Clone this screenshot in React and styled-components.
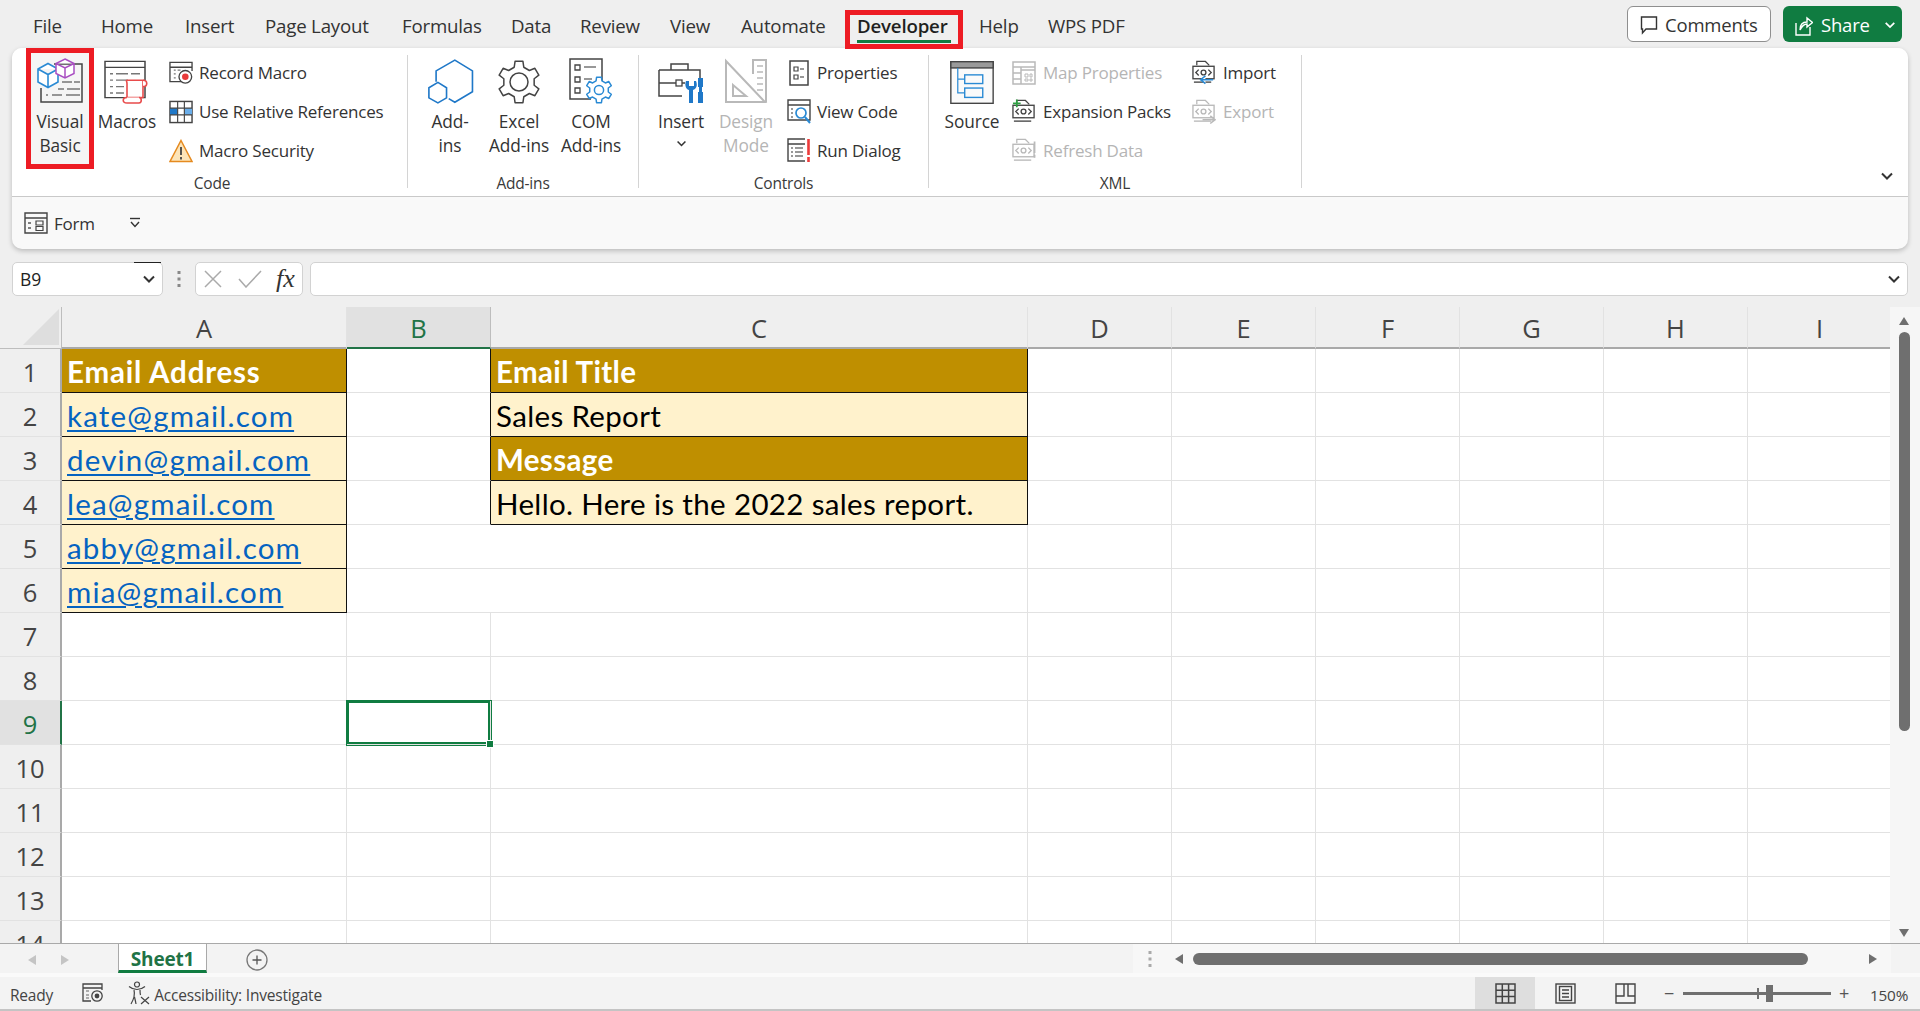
import styled, { createGlobalStyle } from "styled-components";

const GlobalStyle = createGlobalStyle`
  html, body { margin: 0; padding: 0; height: 100%; overflow: hidden; }
  body { background: #efefef; font-family: "Open Sans", "Liberation Sans", sans-serif; color: #333; }
  #root { height: 100%; }
`;

const Page = styled.div`
  display: flex;
  flex-direction: column;
  width: 1920px;
  height: 1011px;
  overflow: hidden;
`;

/* top tabs */
const TopBar = styled.div`
  display: flex;
  align-items: center;
  height: 48px;
  padding-left: 33px;
  flex: none;
`;
const Tab = styled.div`
  position: relative;
  width: ${(p) => p.$w}px;
  flex: none;
  font-size: 18.7px;
  letter-spacing: -0.2px;
  line-height: 48px;
  height: 48px;
  padding-top: 2px;
  box-sizing: border-box;
  color: ${(p) => (p.$active ? "#1f1f1f" : "#333")};
  font-weight: ${(p) => (p.$active ? 600 : 400)};
  white-space: nowrap;
  ${(p) =>
    p.$active &&
    `
    &::before {
      content: "";
      position: absolute;
      left: -12px;
      top: 10px;
      width: 118px;
      height: 39px;
      box-sizing: border-box;
      border: 5px solid #ed1c24;
      z-index: 2;
    }
    &::after {
      content: "";
      position: absolute;
      left: 0;
      top: 40px;
      width: 94px;
      height: 3px;
      background: #107c41;
      z-index: 3;
    }
  `}
`;
const TopRight = styled.div`
  margin-left: auto;
  margin-right: 18px;
  display: flex;
  gap: 12px;
  align-items: center;
`;
const CommentsButton = styled.div`
  display: flex;
  align-items: center;
  gap: 7px;
  box-sizing: border-box;
  width: 144px;
  height: 36px;
  padding: 1px 0 0 12px;
  background: #fff;
  border: 1px solid #8f8f8f;
  border-radius: 6px;
  font-size: 18.5px;
  letter-spacing: -0.2px;
  color: #333;
`;
const ShareButton = styled.div`
  display: flex;
  align-items: center;
  gap: 8px;
  box-sizing: border-box;
  width: 119px;
  height: 36px;
  padding: 1px 0 0 12px;
  background: #107c41;
  border-radius: 6px;
  color: #fff;
  font-size: 18.5px;
  letter-spacing: -0.2px;
`;

/* ribbon */
const Ribbon = styled.div`
  flex: none;
  margin: 0 12px;
  height: 201px;
  box-sizing: border-box;
  border-radius: 10px;
  background: #f9f9f9;
  box-shadow: 0 2px 5px rgba(0, 0, 0, 0.22);
  display: flex;
  flex-direction: column;
`;
const RibbonTop = styled.div`
  display: flex;
  height: 148px;
  background: #fff;
  border-radius: 10px 10px 0 0;
  border-bottom: 1px solid #c9c9c9;
`;
const Group = styled.div`
  width: ${(p) => p.$w}px;
  flex: none;
  display: flex;
  flex-direction: column;
`;
const GroupBody = styled.div`
  display: flex;
  height: 122px;
  padding-left: ${(p) => p.$pad}px;
`;
const GroupLabel = styled.div`
  text-align: center;
  font-size: 15.5px;
  letter-spacing: -0.2px;
  line-height: 26px;
  color: #3a3a3a;
  padding-left: ${(p) => p.$shift || 0}px;
`;
const Separator = styled.div`
  width: 1px;
  flex: none;
  margin: 7px 0 8px;
  background: #d4d4d4;
`;
const LargeButton = styled.div`
  width: ${(p) => p.$w}px;
  flex: none;
  display: flex;
  flex-direction: column;
  align-items: center;
  box-sizing: border-box;
  padding-top: 7px;
  font-size: 17.3px;
  letter-spacing: -0.1px;
  line-height: 24px;
  white-space: nowrap;
  color: ${(p) => (p.$off ? "#b5b5b5" : "#333")};
  ${(p) =>
    p.$marked &&
    `
    height: 111px;
    margin-top: 5px;
    padding-top: 2px;
    background: #f5f5f5;
    outline: 5px solid #ed1c24;
  `}
`;
const IconSlot = styled.div`
  height: 55px;
  box-sizing: border-box;
  padding-bottom: 6px;
  display: flex;
  align-items: flex-end;
  justify-content: center;
  flex: none;
`;
const LabelChevron = styled.span`
  margin-top: 4px;
  line-height: 0;
`;
const SmallColumn = styled.div`
  width: ${(p) => p.$w || "auto"};
  margin-left: ${(p) => p.$ml || 0}px;
  padding-top: 5px;
  flex: none;
`;
const SmallRow = styled.div`
  display: flex;
  align-items: center;
  gap: ${(p) => p.$gap || 6}px;
  height: 39px;
  font-size: 17px;
  letter-spacing: -0.2px;
  white-space: nowrap;
  color: ${(p) => (p.$off ? "#b5b5b5" : "#333")};
`;
const SmallIcon = styled.span`
  width: 24px;
  height: 26px;
  display: flex;
  align-items: center;
  justify-content: center;
  flex: none;
`;
const CollapseButton = styled.div`
  margin: auto 14px 13px auto;
  line-height: 0;
`;
const QuickRow = styled.div`
  display: flex;
  align-items: center;
  flex: 1;
  padding-left: 12px;
  font-size: 17px;
  letter-spacing: -0.2px;
  color: #333;
  border-radius: 0 0 10px 10px;
`;
const QuickLabel = styled.span`
  margin-left: 6px;
  width: 75px;
`;

/* formula bar */
const FormulaBar = styled.div`
  flex: none;
  display: flex;
  align-items: stretch;
  height: 34px;
  margin: 13px 12px 11px;
`;
const FieldBox = styled.div`
  position: relative;
  display: flex;
  align-items: center;
  box-sizing: border-box;
  background: #fff;
  border: 1px solid #d2d2d2;
  border-radius: 5px;
  width: ${(p) => (p.$w ? `${p.$w}px` : "auto")};
  flex: ${(p) => (p.$w ? "none" : "1")};
`;
const NameText = styled.span`
  font-size: 17.5px;
  margin-left: 7px;
  color: #222;
`;
const NameMark = styled.span`
  position: absolute;
  top: -1px;
  right: 1px;
  width: 27px;
  height: 1px;
  background: #222;
`;
const Chevron = styled.span`
  margin-left: auto;
  margin-right: 6px;
  line-height: 0;
`;
const DotsSlot = styled.div`
  width: 32px;
  flex: none;
  display: flex;
  align-items: center;
  justify-content: center;
`;
const FxButtons = styled.div`
  display: flex;
  align-items: center;
  gap: 16px;
  padding-left: 8px;
`;
const FxGap = styled.div`
  width: 7px;
  flex: none;
`;
const FxLabel = styled.span`
  font-family: "Liberation Serif", serif;
  font-style: italic;
  font-size: 26px;
  color: #333;
  margin-left: -2px;
  line-height: 1;
`;

/* sheet */
const SheetArea = styled.div`
  flex: none;
  height: 636px;
  display: flex;
  overflow: hidden;
`;
const SheetCells = styled.div`
  display: grid;
  grid-template-columns: 62px 285px 144px 537px repeat(6, 144px) 0px;
  grid-template-rows: 42px repeat(14, 44px);
  width: 1890px;
  flex: none;
  background: #fff;
  align-content: start;
  overflow: hidden;
`;
const Corner = styled.div`
  background: #efefef;
  border-bottom: 1px solid #bdbdbd;
  border-right: 1px solid #bdbdbd;
  box-sizing: border-box;
  display: flex;
  align-items: flex-end;
  justify-content: flex-end;
  padding: 0 2px 3px 0;
`;
const ColHead = styled.div`
  display: flex;
  align-items: center;
  justify-content: center;
  box-sizing: border-box;
  font-size: 25.5px;
  padding-top: 2px;
  background: ${(p) => (p.$sel ? "#e1e1e1" : "#efefef")};
  color: ${(p) => (p.$sel ? "#217346" : "#444")};
  border-right: 1px solid ${(p) => (p.$sel ? "#bdbdbd" : "#e2e2e2")};
  border-bottom: ${(p) => (p.$sel ? "2px solid #217346" : "2px solid #a9a9a9")};
`;
const RowHead = styled.div`
  display: flex;
  align-items: center;
  justify-content: center;
  box-sizing: border-box;
  font-size: 25.5px;
  padding-top: 2px;
  background: ${(p) => (p.$sel ? "#e1e1e1" : "#efefef")};
  color: ${(p) => (p.$sel ? "#217346" : "#444")};
  border-right: ${(p) => (p.$sel ? "2px solid #217346" : "2px solid #a9a9a9")};
  border-bottom: 1px solid #e2e2e2;
`;
const Cell = styled.div`
  position: relative;
  box-sizing: border-box;
  display: flex;
  align-items: flex-end;
  padding: 0 0 1px 5px;
  font-family: Lato, "Open Sans", sans-serif;
  font-size: 29.5px;
  letter-spacing: ${(p) => p.$track || 0}px;
  line-height: 38px;
  white-space: nowrap;
  grid-column: ${(p) => (p.$span ? `span ${p.$span}` : "auto")};
  background: ${(p) => p.$fill || "#fff"};
  color: ${(p) => p.$ink || "#000"};
  font-weight: ${(p) => (p.$bold ? 700 : 400)};
  border-right: ${(p) => (p.$edge ? "1.5px solid #111" : "1px solid #e2e2e2")};
  border-bottom: ${(p) => (p.$boxed ? "1.5px solid #111" : "1px solid #e2e2e2")};
  ${(p) =>
    p.$current &&
    `
    z-index: 1;
    box-shadow: inset 0 0 0 2px #107c41, 0 0 0 1px #107c41;
    &::after {
      content: "";
      position: absolute;
      right: -4px;
      bottom: -4px;
      width: 6px;
      height: 6px;
      background: #107c41;
      border: 1px solid #fff;
      z-index: 2;
    }
  `}
`;
const MailLink = styled.span`
  color: #0563c1;
  text-decoration: underline;
  text-decoration-thickness: 2px;
  text-underline-offset: 3px;
`;

const VerticalScroll = styled.div`
  width: 30px;
  flex: none;
  display: flex;
  flex-direction: column;
  align-items: center;
  padding-left: 0;
  box-sizing: border-box;
  background: #f6f6f6;
  padding-right: 2px;
`;
const VThumb = styled.div`
  width: 11px;
  height: 399px;
  margin-top: 5px;
  background: #6f6f6f;
  border-radius: 6px;
`;
const ArrowSlot = styled.div`
  line-height: 0;
  margin-top: ${(p) => p.$mt || 0}px;
`;

/* sheet tabs */
const TabsRow = styled.div`
  flex: none;
  height: 34px;
  box-sizing: border-box;
  border-top: 1px solid #a9a9a9;
  background: #f3f3f3;
  display: flex;
  align-items: flex-start;
  position: relative;
`;
const TabsFoot = styled.div`
  position: absolute;
  left: 0;
  right: 0;
  bottom: 0;
  height: 4px;
  background: #fafafa;
`;
const NavArrows = styled.div`
  display: flex;
  gap: 21px;
  width: 118px;
  box-sizing: border-box;
  padding: 10px 0 0 26px;
  flex: none;
`;
const SheetTab = styled.div`
  width: 89px;
  height: 30px;
  box-sizing: border-box;
  flex: none;
  margin-top: -1px;
  background: #fff;
  border: 1px solid #a9a9a9;
  border-top: 1px solid #a9a9a9;
  border-bottom: 3px solid #107c41;
  color: #217346;
  font-weight: 700;
  font-size: 19px;
  letter-spacing: -0.2px;
  line-height: 30px;
  text-align: center;
`;
const AddSheet = styled.div`
  margin: 5px 0 0 39px;
  line-height: 0;
`;
const HScrollWrap = styled.div`
  margin-left: auto;
  width: 758px;
  height: 29px;
  display: flex;
  align-items: center;
  background: #f7f7f7;
  position: relative;
  margin-right: 29px;
`;
const HDots = styled.div`
  width: 34px;
  flex: none;
  display: flex;
  justify-content: center;
`;
const HThumb = styled.div`
  width: 615px;
  height: 12px;
  background: #6f6f6f;
  border-radius: 6px;
  margin-left: 8px;
`;
const HArrow = styled.div`
  line-height: 0;
  margin-left: ${(p) => p.$ml || 0}px;
`;

/* status bar */
const StatusBar = styled.div`
  flex: none;
  height: 32px;
  background: #f3f3f3;
  display: flex;
  align-items: center;
  padding-left: 10px;
  font-size: 15.5px;
  letter-spacing: -0.2px;
  color: #444;
`;
const StatusGap = styled.span`
  width: ${(p) => p.$w}px;
  flex: none;
`;
const StatusText = styled.span`
  white-space: nowrap;
  padding-top: 3px;
`;
const ViewButtons = styled.div`
  margin-left: auto;
  display: flex;
  align-items: stretch;
  height: 100%;
`;
const ViewButton = styled.div`
  width: 60px;
  display: flex;
  align-items: center;
  justify-content: center;
  background: ${(p) => (p.$on ? "#dedede" : "transparent")};
`;
const ZoomBox = styled.div`
  display: flex;
  align-items: center;
  margin-left: 7px;
  width: 258px;
  flex: none;
`;
const ZoomSign = styled.span`
  width: 14px;
  text-align: center;
  font-size: 18px;
  line-height: 1;
  color: #555;
`;
const ZoomTrack = styled.div`
  position: relative;
  width: 148px;
  height: 3px;
  background: #6f6f6f;
  margin: 0 6px 0 7px;
`;
const ZoomTick = styled.span`
  position: absolute;
  left: 74px;
  top: -4px;
  width: 2px;
  height: 11px;
  background: #6f6f6f;
`;
const ZoomKnob = styled.span`
  position: absolute;
  left: 83px;
  top: -7px;
  width: 7px;
  height: 17px;
  background: #6f6f6f;
`;
const ZoomValue = styled.span`
  margin-left: 19px;
  padding-top: 3px;
  font-size: 15.3px;
`;
const BottomLine = styled.div`
  flex: none;
  height: 2px;
  background: #c4c4c4;
`;

/* drawings */
const DARK = "#444";
const BLUE = "#2a8ad4";
const GREY = "#b9b9b9";

const gearPath = (cx, cy, outer, inner, teeth, start = 0) => {
  const pts = [];
  const step = (Math.PI * 2) / teeth;
  for (let i = 0; i < teeth; i++) {
    const a = start + i * step;
    const w = step * 0.18;
    const v = step * 0.3;
    [
      [inner, a - v],
      [outer, a - w],
      [outer, a + w],
      [inner, a + v],
    ].forEach(([r, t]) => pts.push(`${(cx + r * Math.cos(t)).toFixed(2)} ${(cy + r * Math.sin(t)).toFixed(2)}`));
  }
  return `M${pts.join("L")}Z`;
};

const VisualBasicIcon = () => (
  <svg width="48" height="46" viewBox="0 0 48 46" fill="none">
    <path d="M18 6H46V44H5V30" stroke={DARK} strokeWidth="1.5" />
    <path d="M26 24h10M38 24h6M22 31h6M31 31h13M10 37h2M16 37h10M30 37h14" stroke="#777" strokeWidth="1.4" />
    <path d="M12 5.5L22 11V24L12 29.5L2 24V11Z M2 11L12 16.5L22 11 M12 16.5V29.5" stroke={BLUE} strokeWidth="1.6" fill="#fff" />
    <path d="M29 1L38 5.5V15.5L29 20L20 15.5V5.5Z M20 5.5L29 10L38 5.5 M29 10V20" stroke="#a94fc2" strokeWidth="1.5" fill="#fff" />
  </svg>
);
const MacrosIcon = () => (
  <svg width="46" height="44" viewBox="0 0 46 48" preserveAspectRatio="none" fill="none">
    <path d="M1 1.5H41V41H1Z M1 8H41" stroke={DARK} strokeWidth="1.5" />
    <path d="M6 15h3M12 15h12M27 15h9M6 22h3M12 22h12M6 29h3M12 29h8M6 36h3M12 36h8" stroke="#777" strokeWidth="1.4" />
    <path d="M24 22H39V41H23V26C23 22 21 22 24 22Z" stroke="#e84b4b" strokeWidth="1.6" fill="#fff" />
    <path d="M39 22C44 22 44 29 39 29M23 41C18 41 18 47 23 47H35C38 47 38 41 35 41" stroke="#e84b4b" strokeWidth="1.6" fill="#fff" />
  </svg>
);
const RecordIcon = () => (
  <svg width="25" height="24" viewBox="0 0 25 24" fill="none">
    <path d="M13 21H1V1H24V10 M1 6H24" stroke={DARK} strokeWidth="1.4" />
    <path d="M5 9h2M5 13h2M5 17h2M9 9h3" stroke="#777" strokeWidth="1.3" />
    <circle cx="17" cy="16" r="6.6" stroke={DARK} strokeWidth="1.4" fill="#fff" />
    <circle cx="17" cy="16" r="3.4" fill="#e83a3a" />
  </svg>
);
const RelativeIcon = () => (
  <svg width="25" height="24" viewBox="0 0 25 24">
    <rect x="1" y="1" width="23" height="22" fill="#fff" stroke={DARK} strokeWidth="1.5" />
    <rect x="1" y="8" width="8" height="7" fill="#1f78c8" />
    <rect x="16" y="8" width="8" height="7" fill="#6aaeea" />
    <path d="M9 1V23M16 1V23M1 8H24M1 15H24" stroke={DARK} strokeWidth="1.2" fill="none" />
  </svg>
);
const WarningIcon = () => (
  <svg width="24" height="24" viewBox="0 0 24 24">
    <path d="M12 1.5L23 22.5H1Z" fill="#fce4b8" stroke="#e58a1f" strokeWidth="1.5" />
    <path d="M12 8V16M12 18V20.5" stroke="#444" strokeWidth="1.8" />
  </svg>
);
const AddInsIcon = () => (
  <svg width="47" height="45" viewBox="40 27 130 125" fill="none" stroke="#1f78c8" strokeWidth="4.5">
    <path d="M65 90V60L117 30L166 60V118L117 147L100 137" />
    <path d="M70 92L94 107V135L70 149L45 135V107Z" />
  </svg>
);
const GearIcon = () => (
  <svg width="44" height="44" viewBox="0 0 44 44" fill="none" stroke={DARK} strokeWidth="1.5">
    <path d={gearPath(22, 22, 21, 15.5, 6, Math.PI / 6)} strokeLinejoin="round" />
    <circle cx="22" cy="22" r="9" />
  </svg>
);
const ComIcon = () => (
  <svg width="44" height="46" viewBox="0 0 44 46" fill="none">
    <path d="M33 27V1H1V41H22" stroke={DARK} strokeWidth="1.5" />
    <path d="M6 7H11V12H6Z M6 19H11V24H6Z M6 30H11V35H6Z" stroke={DARK} strokeWidth="1.3" />
    <path d="M15 9h12M15 21h8" stroke="#777" strokeWidth="1.4" />
    <path d={gearPath(30, 32, 13, 9.5, 6, Math.PI / 6)} stroke={BLUE} strokeWidth="1.5" fill="#fff" strokeLinejoin="round" />
    <circle cx="30" cy="32" r="4.6" stroke={BLUE} strokeWidth="1.5" />
  </svg>
);
const InsertIcon = () => (
  <svg width="46" height="46" viewBox="0 -4 46 46" fill="none">
    <path d="M1 8H42V21 M1 8V34H24 M1 21H18M24 21H27 M13 8V2H30V8" stroke={DARK} strokeWidth="1.5" />
    <rect x="18" y="18" width="6" height="6" stroke={DARK} strokeWidth="1.3" />
    <path d="M28 19C26 24 29 28 31 28V41H35V28C38 27 40 24 38 19L36 19V24H31V19Z" fill="#1f78c8" />
    <path d="M40 16H45V25H44V30H45V41H40V30H41V25H40Z" fill="#1f78c8" />
  </svg>
);
const DesignIcon = () => (
  <svg width="44" height="46" viewBox="0 0 44 46" fill="none" stroke={GREY} strokeWidth="2">
    <path d="M2 3L41 44H2Z" />
    <path d="M9 27L22 38H9Z" />
    <path d="M29 16V2H42V44" />
    <path d="M33 8h6M33 14h6M33 20h6M33 26h6M33 32h6" strokeWidth="1.4" />
  </svg>
);
const PropertiesIcon = () => (
  <svg width="20" height="26" viewBox="0 0 20 26" fill="none">
    <rect x="1" y="1" width="18" height="24" stroke={DARK} strokeWidth="1.5" />
    <path d="M5 7H9V11H5Z M5 15H9V19H5Z" stroke={DARK} strokeWidth="1.2" />
    <path d="M11 9h4M11 17h4" stroke="#777" strokeWidth="1.4" />
  </svg>
);
const ViewCodeIcon = () => (
  <svg width="24" height="25" viewBox="0 0 24 25" fill="none">
    <path d="M1 1H23V21H1Z M1 6H23" stroke={DARK} strokeWidth="1.4" />
    <path d="M4 10h2M4 14h2M4 18h2" stroke="#777" strokeWidth="1.3" />
    <circle cx="14" cy="14" r="5" stroke={BLUE} strokeWidth="1.7" fill="#fff" />
    <path d="M18 18L23 24" stroke={BLUE} strokeWidth="2" />
  </svg>
);
const RunDialogIcon = () => (
  <svg width="24" height="25" viewBox="0 0 24 25" fill="none">
    <path d="M18 23H1V1H18 M1 6H18" stroke={DARK} strokeWidth="1.4" />
    <path d="M4 10h2M8 10h8M4 14h2M8 14h8M4 18h2M8 18h8" stroke="#777" strokeWidth="1.3" />
    <path d="M21.5 1V17M21.5 19V24" stroke="#ed3b3b" strokeWidth="2.6" />
  </svg>
);
const SourceIcon = () => (
  <svg width="44" height="43" viewBox="36 18 126 124" fill="none">
    <rect x="38" y="20" width="122" height="120" fill="#fafafa" stroke={DARK} strokeWidth="4" />
    <rect x="38" y="20" width="122" height="18" fill="#9a9a9a" stroke={DARK} strokeWidth="4" />
    <path d="M58 38V110H78M58 70H78" stroke={BLUE} strokeWidth="3.5" />
    <rect x="78" y="58" width="52" height="25" stroke={BLUE} strokeWidth="4" />
    <rect x="78" y="96" width="52" height="27" stroke={BLUE} strokeWidth="4" />
  </svg>
);
const MapIcon = () => (
  <svg width="24" height="24" viewBox="0 0 24 24" fill="none" stroke={GREY} strokeWidth="1.5">
    <rect x="1" y="1" width="22" height="22" />
    <path d="M1 6H23M1 12H9M1 18H9M9 6V23M9 9H23" />
    <path d="M13 13H16V16H13Z M18 13H20V16H18Z M13 18H16V20H13Z M18 18H20V20H18Z" strokeWidth="1" />
  </svg>
);
const PackIcon = ({ ink = DARK, kind }) => (
  <svg width="25" height="26" viewBox="0 0 25 26" fill="none">
    <path d="M5 5V1H14L18 5" stroke={ink} strokeWidth="1.3" />
    <rect x="1" y="6" width="22" height="13" stroke={ink} strokeWidth="1.4" fill="#fff" />
    <path d="M7 9.5L4 12.5L7 15.5M17 9.5L20 12.5L17 15.5" stroke={ink} strokeWidth="1.4" />
    <circle cx="12" cy="12.5" r="2.5" stroke={ink} strokeWidth="1.4" />
    <path d="M2 22.5H20" stroke={ink} strokeWidth="1.4" />
    {kind === "plus" && <path d="M5 0V8M1 4H9" stroke="#2ea043" strokeWidth="1.8" />}
    {kind === "in" && <path d="M22 20H10M14 16L9 20L14 24" stroke={BLUE} strokeWidth="1.6" fill="#fff" />}
    {kind === "out" && <path d="M11 21H23M19 17L24 21L19 25" stroke={GREY} strokeWidth="1.6" />}
    {kind === "bang" && <path d="M23.5 3V15M23.5 17V20" stroke={GREY} strokeWidth="1.8" />}
  </svg>
);
const FormIcon = () => (
  <svg width="24" height="22" viewBox="0 0 24 22" fill="none">
    <path d="M1 1H23V21H1Z M1 6H23" stroke={DARK} strokeWidth="1.4" />
    <path d="M4 11h3M4 16h3" stroke="#555" strokeWidth="1.3" />
    <path d="M12 9H19V13H12Z M12 14.5H19V18.5H12Z" stroke={DARK} strokeWidth="1.2" />
  </svg>
);
const QuickMenuIcon = () => (
  <svg width="12" height="12" viewBox="0 0 12 12" fill="none" stroke="#333" strokeWidth="1.4">
    <path d="M1 1.5H11" />
    <path d="M2 5L6 9.5L10 5" />
  </svg>
);
const ChevronIcon = ({ size = 14, ink = "#333", weight = 2 }) => (
  <svg width={size} height={size} viewBox="0 0 14 14" fill="none" stroke={ink} strokeWidth={weight}>
    <path d="M2 4.5L7 9.5L12 4.5" />
  </svg>
);
const CommentIcon = () => (
  <svg width="18" height="20" viewBox="0 0 18 20" fill="none" stroke="#333" strokeWidth="1.4">
    <path d="M1.5 2H16.5V14H6L2.5 18V14H1.5Z" />
  </svg>
);
const ShareIcon = () => (
  <svg width="18" height="22" viewBox="0 0 18 22" fill="none" stroke="#fff" strokeWidth="1.4">
    <path d="M1 9V21H15V13" />
    <path d="M5 16C5 10 8 8 12 8V4L17.5 8.5L12 13V10C9 10 7 12 5 16Z" />
  </svg>
);
const Triangle = ({ dir, ink = "#6f6f6f", size = 12 }) => {
  const shapes = {
    up: "M6 2L11 10H1Z",
    down: "M1 2H11L6 10Z",
    left: "M10 1V11L2 6Z",
    right: "M2 1V11L10 6Z",
  };
  return (
    <svg width={size} height={size} viewBox="0 0 12 12">
      <path d={shapes[dir]} fill={ink} />
    </svg>
  );
};
const CornerMark = () => (
  <svg width="36" height="36" viewBox="0 0 36 36">
    <path d="M36 0V36H0Z" fill="#dedede" />
  </svg>
);
const XMark = () => (
  <svg width="18" height="18" viewBox="0 0 18 18" stroke="#aaa" strokeWidth="1.5" fill="none">
    <path d="M1 1L17 17M17 1L1 17" />
  </svg>
);
const CheckMark = () => (
  <svg width="24" height="18" viewBox="0 0 24 18" stroke="#aaa" strokeWidth="1.5" fill="none">
    <path d="M1 9L8 17L23 1" />
  </svg>
);
const Dots = ({ ink = "#888" }) => (
  <svg width="4" height="18" viewBox="0 0 4 18" fill={ink}>
    <rect x="0.5" y="1" width="3" height="3" />
    <rect x="0.5" y="7.5" width="3" height="3" />
    <rect x="0.5" y="14" width="3" height="3" />
  </svg>
);
const AddSheetIcon = () => (
  <svg width="22" height="22" viewBox="0 0 22 22" fill="none" stroke="#777" strokeWidth="1.3">
    <circle cx="11" cy="11" r="10" />
    <path d="M11 6.5V15.5M6.5 11H15.5" stroke="#555" />
  </svg>
);
const StatusMacroIcon = () => (
  <svg width="22" height="20" viewBox="0 0 22 20" fill="none">
    <path d="M9 18H1V1H20V7 M1 5H20" stroke={DARK} strokeWidth="1.3" />
    <path d="M4 8h3M4 12h3M4 15h3" stroke="#666" strokeWidth="1.2" />
    <circle cx="15" cy="13" r="5.2" stroke={DARK} strokeWidth="1.3" />
    <circle cx="15" cy="13" r="2.4" fill={DARK} />
  </svg>
);
const AccessIcon = () => (
  <svg width="22" height="24" viewBox="0 0 22 24" fill="none" stroke="#444" strokeWidth="1.2">
    <circle cx="9" cy="3.5" r="2.5" />
    <path d="M1 5.5C4 8 6 8.5 9 8.5C12 8.5 14 8 17 5.5 M6 9C7 13 6.5 17 3 23 M12 9C12 11 12 12 12.5 14 M6.5 16C7 18 7.5 20 8 23" />
    <path d="M13 16L21 23M21 16L13 23" />
  </svg>
);
const NormalViewIcon = () => (
  <svg width="21" height="21" viewBox="0 0 21 21" fill="none" stroke="#444" strokeWidth="1.5">
    <rect x="1" y="1" width="19" height="19" />
    <path d="M7.3 1V20M13.6 1V20M1 7.3H20M1 13.6H20" />
  </svg>
);
const PageViewIcon = () => (
  <svg width="21" height="21" viewBox="0 0 21 21" fill="none" stroke="#444" strokeWidth="1.4">
    <rect x="1" y="1" width="19" height="19" />
    <rect x="4.5" y="3.5" width="12" height="14" />
    <path d="M7 7H14M7 10.5H14M7 14H14" />
  </svg>
);
const BreakViewIcon = () => (
  <svg width="21" height="21" viewBox="0 0 21 21" fill="none" stroke="#444" strokeWidth="1.4">
    <path d="M1 1H20V20H1Z M1 13H9V1M13 1V13H20" />
  </svg>
);

/* data */
const TABS = [
  ["File", 68],
  ["Home", 84],
  ["Insert", 80],
  ["Page Layout", 137],
  ["Formulas", 109],
  ["Data", 69],
  ["Review", 90],
  ["View", 71],
  ["Automate", 116],
  ["Developer", 122, true],
  ["Help", 69],
  ["WPS PDF", 100],
];
const LETTERS = ["A", "B", "C", "D", "E", "F", "G", "H", "I"];
const LIGHT = "#fff2cc";
const GOLD = "#bf8f00";
const EMAILS = ["kate@gmail.com", "devin@gmail.com", "lea@gmail.com", "abby@gmail.com", "mia@gmail.com"];
const SIDE_TABLE = [
  ["Email Title", true],
  ["Sales Report", false],
  ["Message", true],
  ["Hello. Here is the 2022 sales report.", false],
];

const renderRow = (row) => {
  const cells = [
    <RowHead key={`h${row}`} $sel={row === 9}>
      {row}
    </RowHead>,
  ];
  // column A
  if (row === 1) {
    cells.push(
      <Cell key="a1" $fill={GOLD} $ink="#fff" $bold $edge $boxed $track={0.8}>
        Email Address
      </Cell>
    );
  } else if (row <= 6) {
    cells.push(
      <Cell key={`a${row}`} $fill={LIGHT} $edge $boxed $track={1.2}>
        <MailLink>{EMAILS[row - 2]}</MailLink>
      </Cell>
    );
  } else {
    cells.push(<Cell key={`a${row}`} />);
  }
  // columns B and C
  if (row <= 4) {
    const [text, head] = SIDE_TABLE[row - 1];
    cells.push(<Cell key={`b${row}`} $edge />);
    cells.push(
      <Cell key={`c${row}`} $fill={head ? GOLD : LIGHT} $ink={head ? "#fff" : "#000"} $bold={head} $edge $boxed $track={0.35}>
        {text}
      </Cell>
    );
  } else if (row <= 6) {
    cells.push(<Cell key={`b${row}`} $span={2} />);
  } else {
    cells.push(<Cell key={`b${row}`} $current={row === 9} />);
    cells.push(<Cell key={`c${row}`} />);
  }
  LETTERS.slice(3).forEach((l) => cells.push(<Cell key={`${l}${row}`} />));
  cells.push(<span key={`end${row}`} />);
  return cells;
};

const App = () => {
  return (
    <Page>
      <GlobalStyle />
      <TopBar>
        {TABS.map(([name, w, active]) => (
          <Tab key={name} $w={w} $active={active}>
            {name}
          </Tab>
        ))}
        <TopRight>
          <CommentsButton>
            <CommentIcon />
            Comments
          </CommentsButton>
          <ShareButton>
            <ShareIcon />
            Share
            <Chevron>
              <ChevronIcon size={12} ink="#fff" />
            </Chevron>
          </ShareButton>
        </TopRight>
      </TopBar>

      <Ribbon>
        <RibbonTop>
          <Group $w={395}>
            <GroupBody $pad={19}>
              <LargeButton $w={58} $marked>
                <IconSlot>
                  <VisualBasicIcon />
                </IconSlot>
                <span>Visual</span>
                <span>Basic</span>
              </LargeButton>
              <LargeButton $w={76}>
                <IconSlot>
                  <MacrosIcon />
                </IconSlot>
                <span>Macros</span>
              </LargeButton>
              <SmallColumn $ml={4}>
                <SmallRow>
                  <SmallIcon>
                    <RecordIcon />
                  </SmallIcon>
                  Record Macro
                </SmallRow>
                <SmallRow>
                  <SmallIcon>
                    <RelativeIcon />
                  </SmallIcon>
                  Use Relative References
                </SmallRow>
                <SmallRow>
                  <SmallIcon>
                    <WarningIcon />
                  </SmallIcon>
                  Macro Security
                </SmallRow>
              </SmallColumn>
            </GroupBody>
            <GroupLabel $shift={5}>Code</GroupLabel>
          </Group>
          <Separator />
          <Group $w={230}>
            <GroupBody $pad={14}>
              <LargeButton $w={56}>
                <IconSlot>
                  <AddInsIcon />
                </IconSlot>
                <span>Add-</span>
                <span>ins</span>
              </LargeButton>
              <LargeButton $w={82}>
                <IconSlot>
                  <GearIcon />
                </IconSlot>
                <span>Excel</span>
                <span>Add-ins</span>
              </LargeButton>
              <LargeButton $w={62}>
                <IconSlot>
                  <ComIcon />
                </IconSlot>
                <span>COM</span>
                <span>Add-ins</span>
              </LargeButton>
            </GroupBody>
            <GroupLabel>Add-ins</GroupLabel>
          </Group>
          <Separator />
          <Group $w={289}>
            <GroupBody $pad={14}>
              <LargeButton $w={56}>
                <IconSlot>
                  <InsertIcon />
                </IconSlot>
                <span>Insert</span>
                <LabelChevron>
                  <ChevronIcon size={11} weight={2} />
                </LabelChevron>
              </LargeButton>
              <LargeButton $w={74} $off>
                <IconSlot>
                  <DesignIcon />
                </IconSlot>
                <span>Design</span>
                <span>Mode</span>
              </LargeButton>
              <SmallColumn $ml={4}>
                <SmallRow>
                  <SmallIcon>
                    <PropertiesIcon />
                  </SmallIcon>
                  Properties
                </SmallRow>
                <SmallRow>
                  <SmallIcon>
                    <ViewCodeIcon />
                  </SmallIcon>
                  View Code
                </SmallRow>
                <SmallRow>
                  <SmallIcon>
                    <RunDialogIcon />
                  </SmallIcon>
                  Run Dialog
                </SmallRow>
              </SmallColumn>
            </GroupBody>
            <GroupLabel>Controls</GroupLabel>
          </Group>
          <Separator />
          <Group $w={372}>
            <GroupBody $pad={9}>
              <LargeButton $w={68}>
                <IconSlot>
                  <SourceIcon />
                </IconSlot>
                <span>Source</span>
              </LargeButton>
              <SmallColumn $ml={6} $w="180px">
                <SmallRow $off $gap={7}>
                  <SmallIcon>
                    <MapIcon />
                  </SmallIcon>
                  Map Properties
                </SmallRow>
                <SmallRow $gap={7}>
                  <SmallIcon>
                    <PackIcon kind="plus" />
                  </SmallIcon>
                  Expansion Packs
                </SmallRow>
                <SmallRow $off $gap={7}>
                  <SmallIcon>
                    <PackIcon ink={GREY} kind="bang" />
                  </SmallIcon>
                  Refresh Data
                </SmallRow>
              </SmallColumn>
              <SmallColumn>
                <SmallRow $gap={7}>
                  <SmallIcon>
                    <PackIcon kind="in" />
                  </SmallIcon>
                  Import
                </SmallRow>
                <SmallRow $off $gap={7}>
                  <SmallIcon>
                    <PackIcon ink={GREY} kind="out" />
                  </SmallIcon>
                  Export
                </SmallRow>
              </SmallColumn>
            </GroupBody>
            <GroupLabel>XML</GroupLabel>
          </Group>
          <Separator />
          <CollapseButton>
            <ChevronIcon size={14} />
          </CollapseButton>
        </RibbonTop>
        <QuickRow>
          <FormIcon />
          <QuickLabel>Form</QuickLabel>
          <QuickMenuIcon />
        </QuickRow>
      </Ribbon>

      <FormulaBar>
        <FieldBox $w={151}>
          <NameText>B9</NameText>
          <NameMark />
          <Chevron>
            <ChevronIcon size={14} />
          </Chevron>
        </FieldBox>
        <DotsSlot>
          <Dots />
        </DotsSlot>
        <FieldBox $w={108}>
          <FxButtons>
            <XMark />
            <CheckMark />
            <FxLabel>fx</FxLabel>
          </FxButtons>
        </FieldBox>
        <FxGap />
        <FieldBox>
          <Chevron>
            <ChevronIcon size={14} />
          </Chevron>
        </FieldBox>
      </FormulaBar>

      <SheetArea>
        <SheetCells>
          <Corner>
            <CornerMark />
          </Corner>
          {LETTERS.map((l) => (
            <ColHead key={l} $sel={l === "B"}>
              {l}
            </ColHead>
          ))}
          <span />
          {Array.from({ length: 14 }, (_, i) => renderRow(i + 1))}
        </SheetCells>
        <VerticalScroll>
          <ArrowSlot $mt={8}>
            <Triangle dir="up" />
          </ArrowSlot>
          <VThumb />
          <ArrowSlot $mt={196}>
            <Triangle dir="down" />
          </ArrowSlot>
        </VerticalScroll>
      </SheetArea>

      <TabsRow>
        <NavArrows>
          <Triangle dir="left" ink="#c4c4c4" />
          <Triangle dir="right" ink="#c4c4c4" />
        </NavArrows>
        <SheetTab>Sheet1</SheetTab>
        <AddSheet>
          <AddSheetIcon />
        </AddSheet>
        <HScrollWrap>
          <HDots>
            <Dots ink="#aaa" />
          </HDots>
          <HArrow $ml={6}>
            <Triangle dir="left" />
          </HArrow>
          <HThumb />
          <HArrow $ml={59}>
            <Triangle dir="right" />
          </HArrow>
        </HScrollWrap>
        <TabsFoot />
      </TabsRow>

      <StatusBar>
        <StatusText>Ready</StatusText>
        <StatusGap $w={29} />
        <StatusMacroIcon />
        <StatusGap $w={24} />
        <AccessIcon />
        <StatusGap $w={4} />
        <StatusText>Accessibility: Investigate</StatusText>
        <ViewButtons>
          <ViewButton $on>
            <NormalViewIcon />
          </ViewButton>
          <ViewButton>
            <PageViewIcon />
          </ViewButton>
          <ViewButton>
            <BreakViewIcon />
          </ViewButton>
        </ViewButtons>
        <ZoomBox>
          <ZoomSign>−</ZoomSign>
          <ZoomTrack>
            <ZoomTick />
            <ZoomKnob />
          </ZoomTrack>
          <ZoomSign>+</ZoomSign>
          <ZoomValue>150%</ZoomValue>
        </ZoomBox>
      </StatusBar>
      <BottomLine />
    </Page>
  );
};

export default App;
